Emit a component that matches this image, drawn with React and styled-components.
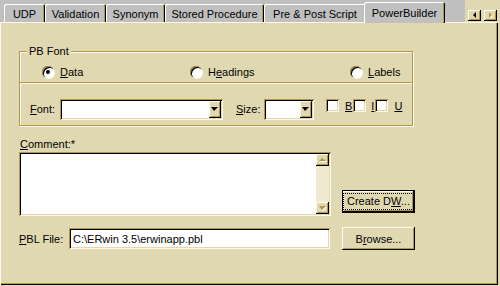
import React from 'react';
import styled, { createGlobalStyle } from 'styled-components';

const FACE = '#e0d8b0';
const LIGHT = '#fcfaf0';
const SHADOW = '#b09848';
const GRAY = '#c0c0c0';

const GlobalStyle = createGlobalStyle`
  html, body {
    margin: 0;
    padding: 0;
    background: ${FACE};
  }
  body {
    font-family: "Liberation Sans", Arial, sans-serif;
    font-size: 11px;
    color: #000;
  }
`;

const Window = styled.div`
  width: 500px;
  height: 286px;
  display: flex;
  flex-direction: column;
  background: ${FACE};
  overflow: hidden;
`;

const TabStrip = styled.div`
  height: 22px;
  display: flex;
  flex-shrink: 0;
`;

const TabRow = styled.div`
  flex: 1;
  display: flex;
  align-items: flex-end;
  padding-left: 4px;
  background: ${GRAY};
`;

const Tab = styled.div`
  position: relative;
  z-index: ${(p) => (p.$active ? 2 : 1)};
  box-sizing: border-box;
  width: ${(p) => p.$w}px;
  height: ${(p) => (p.$active ? 21 : 18)}px;
  margin-left: ${(p) => (p.$active ? -2 : 0)}px;
  margin-bottom: ${(p) => (p.$active ? -1 : 0)}px;
  display: flex;
  align-items: center;
  justify-content: center;
  padding-top: ${(p) => (p.$active ? 0 : 1)}px;
  background: ${GRAY};
  border-radius: 2px 2px 0 0;
  box-shadow: inset 1px 1px #fff, inset -1px 0 #000, inset -2px 0 ${SHADOW};
  white-space: nowrap;
`;

const ScrollArrows = styled.div`
  width: 35px;
  display: flex;
  align-items: flex-end;
  gap: 3px;
  padding: 0 0 1px 3px;
  box-sizing: border-box;
`;

const ArrowButton = styled.div`
  width: 13px;
  height: 11px;
  display: flex;
  align-items: center;
  justify-content: center;
  background: ${FACE};
  box-shadow: inset -1px -1px #000, inset 1px 1px ${LIGHT}, inset -2px -2px ${SHADOW};
`;

const Panel = styled.div`
  flex: 1;
  width: 498px;
  margin-bottom: 1px;
  box-sizing: border-box;
  padding: 29px 0 0 19px;
  background: ${FACE};
  box-shadow: inset 1px 1px ${LIGHT}, inset -1px -1px #000, inset -2px -2px ${SHADOW};
  display: flex;
  flex-direction: column;
`;

const GroupBox = styled.div`
  position: relative;
  width: 394px;
  box-sizing: border-box;
  border: 1px solid ${SHADOW};
  box-shadow: inset 1px 1px ${LIGHT}, 1px 1px ${LIGHT};
`;

const Legend = styled.span`
  position: absolute;
  top: -7px;
  left: 7px;
  padding: 0 2px;
  background: ${FACE};
  line-height: 13px;
`;

const RadioRow = styled.div`
  height: 30px;
  box-sizing: border-box;
  padding: 9px 0 0 22px;
  display: grid;
  grid-template-columns: 148px 160px auto;
  align-items: center;
`;

const Divider = styled.div`
  height: 1px;
  background: ${SHADOW};
  box-shadow: 0 1px ${LIGHT};
`;

const FontRow = styled.div`
  height: 42px;
  box-sizing: border-box;
  padding: 10px 0 0 10px;
  display: flex;
  align-items: center;
`;

const Option = styled.label`
  display: flex;
  align-items: center;
  gap: ${(p) => (p.$gap != null ? p.$gap : 6)}px;
  margin-right: ${(p) => p.$mr || 0}px;
  margin-bottom: ${(p) => p.$mb || 0}px;
`;

const Radio = styled.span`
  position: relative;
  width: 12px;
  height: 12px;
  border-radius: 50%;
  background: #fff;
  box-sizing: border-box;
  box-shadow: inset 1px 1px ${SHADOW}, inset 2px 2px #000, 1px 1px ${LIGHT};
  &::after {
    content: '';
    display: ${(p) => (p.$checked ? 'block' : 'none')};
    position: absolute;
    left: 4px;
    top: 4px;
    width: 4px;
    height: 4px;
    border-radius: 50%;
    background: #000;
  }
`;

const Check = styled.span`
  width: 13px;
  height: 13px;
  background: #fff;
  box-shadow: inset 1px 1px ${SHADOW}, inset -1px -1px ${LIGHT}, inset 2px 2px #000, inset -2px -2px ${FACE};
`;

const Label = styled.span`
  width: ${(p) => (p.$w ? `${p.$w}px` : 'auto')};
  flex-shrink: 0;
  white-space: nowrap;
`;

const U = styled.span`
  text-decoration: underline;
  text-underline-offset: 1px;
`;

const Combo = styled.div`
  width: ${(p) => p.$w}px;
  height: 21px;
  flex-shrink: 0;
  box-sizing: border-box;
  padding: 2px;
  display: flex;
  justify-content: flex-end;
  background: #fff;
  box-shadow: inset 1px 1px ${SHADOW}, inset -1px -1px ${LIGHT}, inset 2px 2px #000, inset -2px -2px ${FACE};
  margin-right: ${(p) => p.$mr || 0}px;
`;

const DropButton = styled.div`
  width: 12px;
  height: 100%;
  display: flex;
  align-items: center;
  justify-content: center;
  background: ${FACE};
  box-shadow: inset -1px -1px #000, inset 1px 1px ${LIGHT}, inset -2px -2px ${SHADOW};
`;

const CommentLabel = styled.div`
  margin-top: 12px;
  padding-left: 1px;
  line-height: 13px;
`;

const CommentRow = styled.div`
  margin-top: 1px;
  display: flex;
  align-items: flex-end;
  gap: 11px;
`;

const TextArea = styled.div`
  width: 312px;
  height: 64px;
  box-sizing: border-box;
  padding: 2px;
  display: flex;
  justify-content: flex-end;
  background: #fff;
  box-shadow: inset 1px 1px ${SHADOW}, inset -1px -1px ${LIGHT}, inset 2px 2px #000, inset -2px -2px ${FACE};
`;

const ScrollBar = styled.div`
  width: 13px;
  display: flex;
  flex-direction: column;
  justify-content: space-between;
  background: #efe9d2;
`;

const ScrollButton = styled.div`
  height: 12px;
  display: flex;
  align-items: center;
  justify-content: center;
  background: ${FACE};
  box-shadow: inset -1px -1px #000, inset 1px 1px ${LIGHT}, inset -2px -2px ${SHADOW};
`;

const Button = styled.div`
  width: 73px;
  height: 23px;
  box-sizing: border-box;
  display: flex;
  align-items: center;
  justify-content: center;
  background: ${FACE};
  margin-bottom: ${(p) => p.$mb || 0}px;
  box-shadow: ${(p) =>
    p.$default
      ? `inset 0 0 0 1px #000, inset -2px -2px #000, inset 2px 2px ${LIGHT}, inset -3px -3px ${SHADOW}`
      : `inset -1px -1px #000, inset 1px 1px ${LIGHT}, inset -2px -2px ${SHADOW}`};
`;

const Focus = styled.span`
  padding: 1px 3px;
  outline: 1px dotted #000;
  outline-offset: 0;
  line-height: 13px;
`;

const FileRow = styled.div`
  margin-top: 11px;
  display: flex;
  align-items: center;
`;

const TextField = styled.div`
  width: 261px;
  height: 21px;
  box-sizing: border-box;
  padding: 0 4px;
  display: flex;
  align-items: center;
  background: #fff;
  margin-right: 12px;
  box-shadow: inset 1px 1px ${SHADOW}, inset -1px -1px ${LIGHT}, inset 2px 2px #000, inset -2px -2px ${FACE};
`;

const Tri = ({ dir, color = '#000', shade }) => {
  const pts = {
    left: '4,0 4,6 1,3',
    right: '1,0 1,6 4,3',
    up: '3,1 0,4 7,4',
    down: '0,1 7,1 3,5',
  }[dir];
  const vb = dir === 'left' || dir === 'right' ? '0 0 5 7' : '0 0 8 6';
  const [w, h] = dir === 'left' || dir === 'right' ? [5, 7] : [8, 6];
  return (
    <svg width={w} height={h} viewBox={vb} style={{ display: 'block' }}>
      {shade && <polygon points={pts} fill={shade} transform="translate(1,1)" />}
      <polygon points={pts} fill={color} />
    </svg>
  );
};

const tabs = [
  { name: 'UDP', w: 41 },
  { name: 'Validation', w: 61 },
  { name: 'Synonym', w: 59 },
  { name: 'Stored Procedure', w: 99 },
  { name: 'Pre & Post Script', w: 102 },
  { name: 'PowerBuilder', w: 81, active: true },
];

export default function App() {
  return (
    <Window>
      <GlobalStyle />
      <TabStrip>
        <TabRow>
          {tabs.map((t) => (
            <Tab key={t.name} $w={t.w} $active={t.active}>
              {t.name}
            </Tab>
          ))}
        </TabRow>
        <ScrollArrows>
          <ArrowButton>
            <Tri dir="left" />
          </ArrowButton>
          <ArrowButton>
            <Tri dir="right" color={SHADOW} shade={LIGHT} />
          </ArrowButton>
        </ScrollArrows>
      </TabStrip>

      <Panel>
        <GroupBox>
          <Legend>PB Font</Legend>
          <RadioRow>
            <Option>
              <Radio $checked />
              <span><U>D</U>ata</span>
            </Option>
            <Option>
              <Radio />
              <span>H<U>e</U>adings</span>
            </Option>
            <Option>
              <Radio />
              <span><U>L</U>abels</span>
            </Option>
          </RadioRow>
          <Divider />
          <FontRow>
            <Label $w={30}><U>F</U>ont:</Label>
            <Combo $w={163} $mr={13}>
              <DropButton>
                <Tri dir="down" />
              </DropButton>
            </Combo>
            <Label $w={28}><U>S</U>ize:</Label>
            <Combo $w={50} $mr={12}>
              <DropButton>
                <Tri dir="down" />
              </DropButton>
            </Combo>
            <Option $mb={7} $mr={1} $gap={6}>
              <Check />
              <U>B</U>
            </Option>
            <Option $mb={7} $mr={1} $gap={5}>
              <Check />
              <U>I</U>
            </Option>
            <Option $mb={7} $gap={6}>
              <Check />
              <U>U</U>
            </Option>
          </FontRow>
        </GroupBox>

        <CommentLabel><U>C</U>omment:*</CommentLabel>
        <CommentRow>
          <TextArea>
            <ScrollBar>
              <ScrollButton>
                <Tri dir="up" color={SHADOW} shade={LIGHT} />
              </ScrollButton>
              <ScrollButton>
                <Tri dir="down" color={SHADOW} shade={LIGHT} />
              </ScrollButton>
            </ScrollBar>
          </TextArea>
          <Button $default $mb={3}>
            <Focus>Create D<U>W</U>...</Focus>
          </Button>
        </CommentRow>

        <FileRow>
          <Label $w={50}><U>P</U>BL File:</Label>
          <TextField>C:\ERwin 3.5\erwinapp.pbl</TextField>
          <Button>B<U>r</U>owse...</Button>
        </FileRow>
      </Panel>
    </Window>
  );
}
